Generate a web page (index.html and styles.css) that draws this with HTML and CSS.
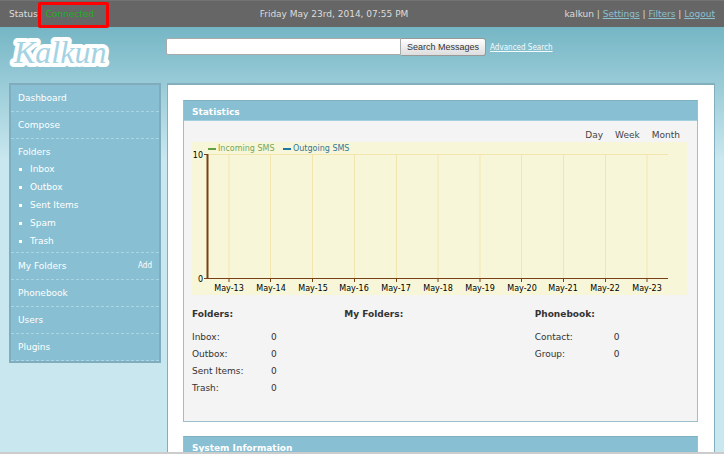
FILE: index.html
```html
<!DOCTYPE html>
<html lang="en">

<head>
  <meta charset="UTF-8">
  <meta name="viewport" content="width=device-width, initial-scale=1.0">
  <title>Kalkun</title>
  <link rel="stylesheet" href="styles.css">
</head>

<body>
  <div class="topbar">
    <div class="status">Status: <span class="connected">Connected</span><span class="highlight"></span></div>
    <div class="date">Friday May 23rd, 2014, 07:55 PM</div>
    <div class="user-menu">kalkun | <a href="#">Settings</a> | <a href="#">Filters</a> | <a href="#">Logout</a></div>
  </div>

  <div class="header">
    <a href="#" class="logo">
      <svg width="110" height="44" viewBox="0 0 110 44">
        <text x="5" y="30">Kalkun</text>
      </svg>
    </a>
    <form class="search">
      <input type="text" class="search-input" aria-label="Search Messages">
      <button type="submit">Search Messages</button>
      <a href="#">Advanced Search</a>
    </form>
  </div>

  <div class="page">
    <ul class="sidebar">
      <li><a href="#">Dashboard</a></li>
      <li><a href="#">Compose</a></li>
      <li class="open">
        <a href="#">Folders</a>
        <ul class="folders">
          <li><a href="#">Inbox</a></li>
          <li><a href="#">Outbox</a></li>
          <li><a href="#">Sent Items</a></li>
          <li><a href="#">Spam</a></li>
          <li><a href="#">Trash</a></li>
        </ul>
      </li>
      <li class="split"><a href="#">My Folders</a> <a href="#" class="add">Add</a></li>
      <li><a href="#">Phonebook</a></li>
      <li><a href="#">Users</a></li>
      <li><a href="#">Plugins</a></li>
    </ul>

    <div class="content">
      <div class="panel">
        <h2>Statistics</h2>
        <div class="panel-body">
          <div class="range"><a href="#">Day</a><a href="#">Week</a><a href="#">Month</a></div>
          <svg class="chart" viewBox="0 0 495 153">
            <rect width="495" height="153" fill="#f8f6d8"/>
            <rect x="16" y="6" width="8" height="2" fill="#639f45"/>
            <text x="26" y="9" fill="#77a757">Incoming SMS</text>
            <rect x="91" y="6" width="8" height="2" fill="#2077a0"/>
            <text x="101" y="9" fill="#30789a">Outgoing SMS</text>
            <path class="grid" d="M17 12.5H476M37 12V136M78.500 12V136M120.500 12V136M162.500 12V136M204.500 12V136M246 12V136M288 12V136M329.500 12V136M371.500 12V136M413.500 12V136M455 12V136"/>
            <path class="axis" d="M15.500 12V137"/>
            <path class="axis thin" d="M12 12.500H16M12 136.500H476M37 137V140M78.500 137V140M120.500 137V140M162.500 137V140M204.500 137V140M246 137V140M288 137V140M329.500 137V140M371.500 137V140M413.500 137V140M455 137V140"/>
            <g text-anchor="end">
              <text x="11" y="16">10</text>
              <text x="11" y="140">0</text>
            </g>
            <g text-anchor="middle">
              <text x="37" y="149">May-13</text>
              <text x="79" y="149">May-14</text>
              <text x="121" y="149">May-15</text>
              <text x="162" y="149">May-16</text>
              <text x="204" y="149">May-17</text>
              <text x="246" y="149">May-18</text>
              <text x="288" y="149">May-19</text>
              <text x="330" y="149">May-20</text>
              <text x="371" y="149">May-21</text>
              <text x="413" y="149">May-22</text>
              <text x="455" y="149">May-23</text>
            </g>
          </svg>

          <div class="summary">
            <div>
              <h3>Folders:</h3>
              <table>
                <tr><th scope="row">Inbox:</th><td>0</td></tr>
                <tr><th scope="row">Outbox:</th><td>0</td></tr>
                <tr><th scope="row">Sent Items:</th><td>0</td></tr>
                <tr><th scope="row">Trash:</th><td>0</td></tr>
              </table>
            </div>
            <div>
              <h3>My Folders:</h3>
            </div>
            <div>
              <h3>Phonebook:</h3>
              <table>
                <tr><th scope="row">Contact:</th><td>0</td></tr>
                <tr><th scope="row">Group:</th><td>0</td></tr>
              </table>
            </div>
          </div>
        </div>
      </div>

      <div class="panel">
        <h2>System Information</h2>
      </div>
    </div>
  </div>
</body>

</html>
```
FILE: styles.css
```css
* {
  box-sizing: border-box;
}

body {
  display: flex;
  flex-direction: column;
  height: 100vh;
  margin: 0;
  overflow: hidden;
  border-bottom: 2px solid #ccc;
  background: #c8e7ef linear-gradient(to bottom, #75b6c5 27px, #c8e7ef 158px) no-repeat;
  font-family: "DejaVu Sans", Verdana, sans-serif;
  font-size: 9px;
  line-height: 11px;
  color: #333;
}

ul {
  margin: 0;
  padding: 0;
  list-style: none;
}

.topbar {
  display: grid;
  grid-template-columns: 1fr auto 1fr;
  flex: none;
  height: 27px;
  padding: 8px 9px 0;
  border-top: 1px solid #737373;
  background: #666;
  color: #ddd;
}

.topbar a {
  color: #8cc0d1;
}

.status {
  position: relative;
  justify-self: start;
}

.connected {
  margin-left: 2px;
  color: #1fb01f;
}

.date {
  padding-right: 56px;
}

.user-menu {
  justify-self: end;
}

/* red frame round the connection state */
.highlight {
  position: absolute;
  top: -7px;
  left: 29px;
  width: 71px;
  height: 26px;
  border: 3px solid #f00;
  border-radius: 2px;
}

.header {
  display: flex;
  flex: none;
  height: 56px;
  padding-left: 9px;
}

.logo {
  width: 157px;
  padding-top: 6px;
}

.logo text {
  font: italic 32px "Liberation Serif", serif;
  fill: #a4d3e3;
  stroke: #fff;
  stroke-width: 8px;
  stroke-linejoin: round;
  paint-order: stroke;
}

.search {
  display: flex;
  align-items: flex-start;
  padding-top: 11px;
}

.search-input {
  width: 235px;
  height: 17px;
  padding: 0 4px;
  border: 1px solid #aaa;
  border-radius: 2px 0 0 2px;
  background: #fff;
  font: inherit;
}

.search button {
  height: 18px;
  padding: 0 6px;
  border: 1px solid #999;
  border-left: none;
  border-radius: 0 3px 3px 0;
  background: linear-gradient(to bottom, #fff, #ddd);
  font: 9px "Liberation Sans", Arial, sans-serif;
  color: #333;
}

.search a {
  padding: 4px 0 0 4px;
  font-family: "DejaVu Sans Condensed", "DejaVu Sans", sans-serif;
  font-size: 8px;
  color: #f4fbfd;
}

.page {
  display: flex;
  flex: 1;
  align-items: flex-start;
  gap: 6px;
  min-height: 0;
  padding: 0 9px;
}

.sidebar {
  flex: none;
  width: 152px;
  border: 2px solid #7fadbe;
  background: #88bfd3;
}

.sidebar a {
  color: #fff;
  text-decoration: none;
}

.sidebar > li {
  padding: 8px 7px 7px;
  border-bottom: 1px dashed #a9d6e3;
}

.sidebar > .open {
  padding-bottom: 2px;
}

.sidebar .split {
  display: flex;
  justify-content: space-between;
}

.sidebar .add {
  font-family: "DejaVu Sans Condensed", "DejaVu Sans", sans-serif;
  font-size: 8px;
  line-height: 9px;
}

.folders {
  padding-top: 2px;
}

.folders li {
  display: flex;
  align-items: center;
  gap: 8px;
  line-height: 18px;
}

.folders li::before {
  content: "";
  width: 3px;
  height: 3px;
  margin-left: 1px;
  background: #fff;
}

.content {
  flex: 1;
  align-self: stretch;
  padding: 15px 16px 0 15px;
  border: 1px solid #83aebe;
  border-top-width: 2px;
  border-bottom: none;
  background: #fff;
  overflow: hidden;
}

.panel {
  margin-bottom: 14px;
  border: 1px solid #9dbfcc;
  border-top-color: #7fb0bf;
  background: #f4f4f4;
}

.panel h2 {
  margin: 0;
  padding: 6px 8px 2px;
  border-bottom: 1px solid #a3d0dd;
  background: #88bfd3;
  font-size: 9px;
  color: #fff;
}

.panel-body {
  min-height: 300px;
  padding: 9px 10px 0 8px;
}

.range {
  display: flex;
  justify-content: flex-end;
  gap: 12px;
  padding-right: 7px;
}

.range a {
  color: #444;
  text-decoration: none;
}

.chart {
  display: block;
  width: 100%;
  margin-top: 1px;
}

.chart text {
  font-size: 8px;
}

.chart path {
  fill: none;
}

.chart .grid {
  stroke: #f3e5b0;
}

.chart .axis {
  stroke: #784016;
  stroke-width: 2px;
}

.chart .thin {
  stroke-width: 1px;
}

.summary {
  display: grid;
  grid-template-columns: 4fr 5fr 4fr;
  margin-top: 14px;
}

.summary h3 {
  margin: 0 0 9px;
  font-size: 9px;
}

.summary table {
  border-collapse: collapse;
}

.summary th,
.summary td {
  height: 17px;
  padding: 0;
  font-weight: normal;
  text-align: left;
}

.summary th {
  width: 79px;
}
```
